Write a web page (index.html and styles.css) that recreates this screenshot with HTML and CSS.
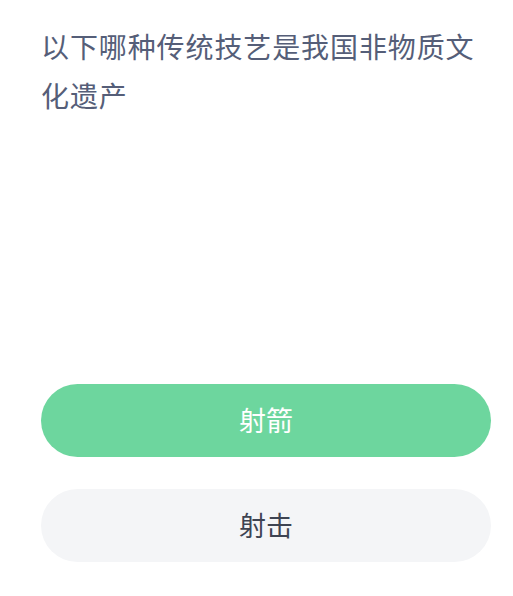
FILE: index.html
```html
<!DOCTYPE html>
<html lang="zh-CN">
<head>
    <meta charset="UTF-8">
    <meta name="viewport" content="width=device-width, initial-scale=1.0">
    <title>答题</title>
    <link rel="stylesheet" href="styles.css">
</head>
<body>
    <div class="quiz">
        <div class="question">以下哪种传统技艺是我国非物质文化遗产</div>

        <div class="options">
            <button type="button" class="option option-right">射箭</button>
            <button type="button" class="option">射击</button>
        </div>
    </div>
</body>
</html>
```

FILE: styles.css
```css
body {
    margin: 0;
    padding: 0;
    background-color: #ffffff;
    font-family: "Noto Sans CJK SC", "Noto Sans", sans-serif;
}

.quiz {
    padding: 22px 22px 0 41px;
}

.question {
    max-width: 444px;
    font-size: 28px;
    line-height: 49px;
    color: #555e78;
    letter-spacing: 0.9px;
}

.options {
    display: flex;
    flex-direction: column;
    gap: 32px;
    margin-top: 264px;
}

.option {
    display: block;
    width: 100%;
    height: 73px;
    padding: 0 0 3px;
    border: none;
    border-radius: 37px;
    background-color: #f4f5f7;
    color: #3e4452;
    font-family: inherit;
    font-size: 27px;
    cursor: pointer;
}

.option-right {
    background-color: #6dd69e;
    color: #ffffff;
}
```
